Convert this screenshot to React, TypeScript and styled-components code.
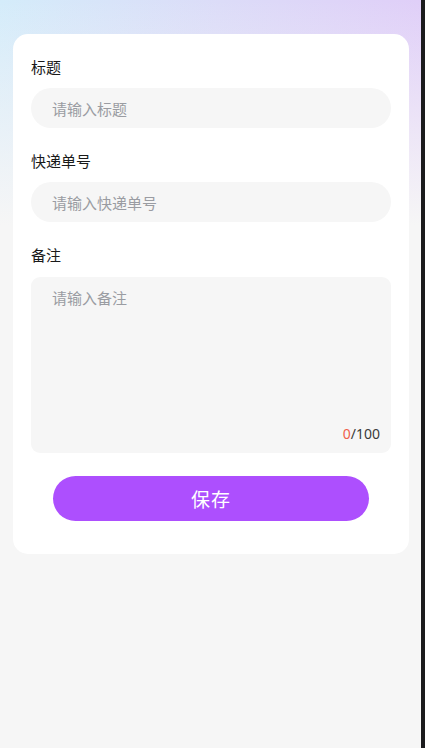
import React, { useState } from "react";
import styled, { createGlobalStyle } from "styled-components";

const GlobalStyle = createGlobalStyle`
  html, body { margin: 0; padding: 0; background: #f6f6f6; }
  * { box-sizing: border-box; }
  body { font-family: "Noto Sans CJK SC", "Noto Sans", sans-serif; }
`;

const Screen = styled.div`
  display: flex;
  width: 425px;
  height: 748px;
  overflow: hidden;
`;

const Page = styled.div`
  flex: 1;
  min-height: 748px;
  background:
    linear-gradient(180deg, rgba(246,246,246,0) 0px, rgba(246,246,246,0.5) 110px, #f6f6f6 225px),
    linear-gradient(100deg, #d4ecfa 0%, #dcdcf8 40%, #e2c6f8 100%);
  padding: 34px 12px 0 13px;
`;

const EdgeStrip = styled.div`
  width: 4px;
  background: #1b1b1d;
`;

const Card = styled.div`
  background: #ffffff;
  border-radius: 15px;
  padding: 22px 18px 33px 18px;
  display: flex;
  flex-direction: column;
`;

const Label = styled.div`
  font-size: 15px;
  line-height: 22px;
  color: #1a1a1a;
  margin-bottom: 10px;
`;

const Field = styled.div`
  display: flex;
  flex-direction: column;
  margin-bottom: 22px;
`;

const Input = styled.input`
  height: 40px;
  border: none;
  outline: none;
  border-radius: 20px;
  background: #f6f6f6;
  padding: 0 21px;
  font-family: inherit;
  font-size: 15px;
  color: #333;
  &::placeholder { color: #9a9ca2; }
`;

const AreaBox = styled.div`
  margin-top: 1px;
  height: 176px;
  border-radius: 9px;
  background: #f6f6f6;
  display: flex;
  flex-direction: column;
  padding: 10px 11px 9px 21px;
`;

const TextArea = styled.textarea`
  flex: 1;
  border: none;
  outline: none;
  resize: none;
  background: transparent;
  font-family: inherit;
  font-size: 15px;
  line-height: 22px;
  color: #333;
  padding: 0;
  &::placeholder { color: #9a9ca2; }
`;

const Counter = styled.div`
  align-self: flex-end;
  font-family: "Noto Sans", sans-serif;
  font-size: 14px;
  line-height: 20px;
  color: #3a3a3a;
`;

const CountNum = styled.span`
  color: #f0604a;
`;

const SaveButton = styled.button`
  margin: 1px 22px 0 22px;
  height: 45px;
  border: none;
  border-radius: 23px;
  background: #ad4ffe;
  color: #ffffff;
  font-family: inherit;
  font-size: 19px;
  letter-spacing: 1px;
  cursor: pointer;
`;

export default function App() {
  const [note, setNote] = useState("");
  return (
    <>
      <GlobalStyle />
      <Screen>
        <Page>
          <Card>
            <Field>
              <Label>标题</Label>
              <Input placeholder="请输入标题" />
            </Field>
            <Field>
              <Label>快递单号</Label>
              <Input placeholder="请输入快递单号" />
            </Field>
            <Field>
              <Label>备注</Label>
              <AreaBox>
                <TextArea
                  placeholder="请输入备注"
                  maxLength={100}
                  value={note}
                  onChange={(e) => setNote(e.target.value)}
                />
                <Counter>
                  <CountNum>{note.length}</CountNum>/100
                </Counter>
              </AreaBox>
            </Field>
            <SaveButton>保存</SaveButton>
          </Card>
        </Page>
        <EdgeStrip />
      </Screen>
    </>
  );
}
